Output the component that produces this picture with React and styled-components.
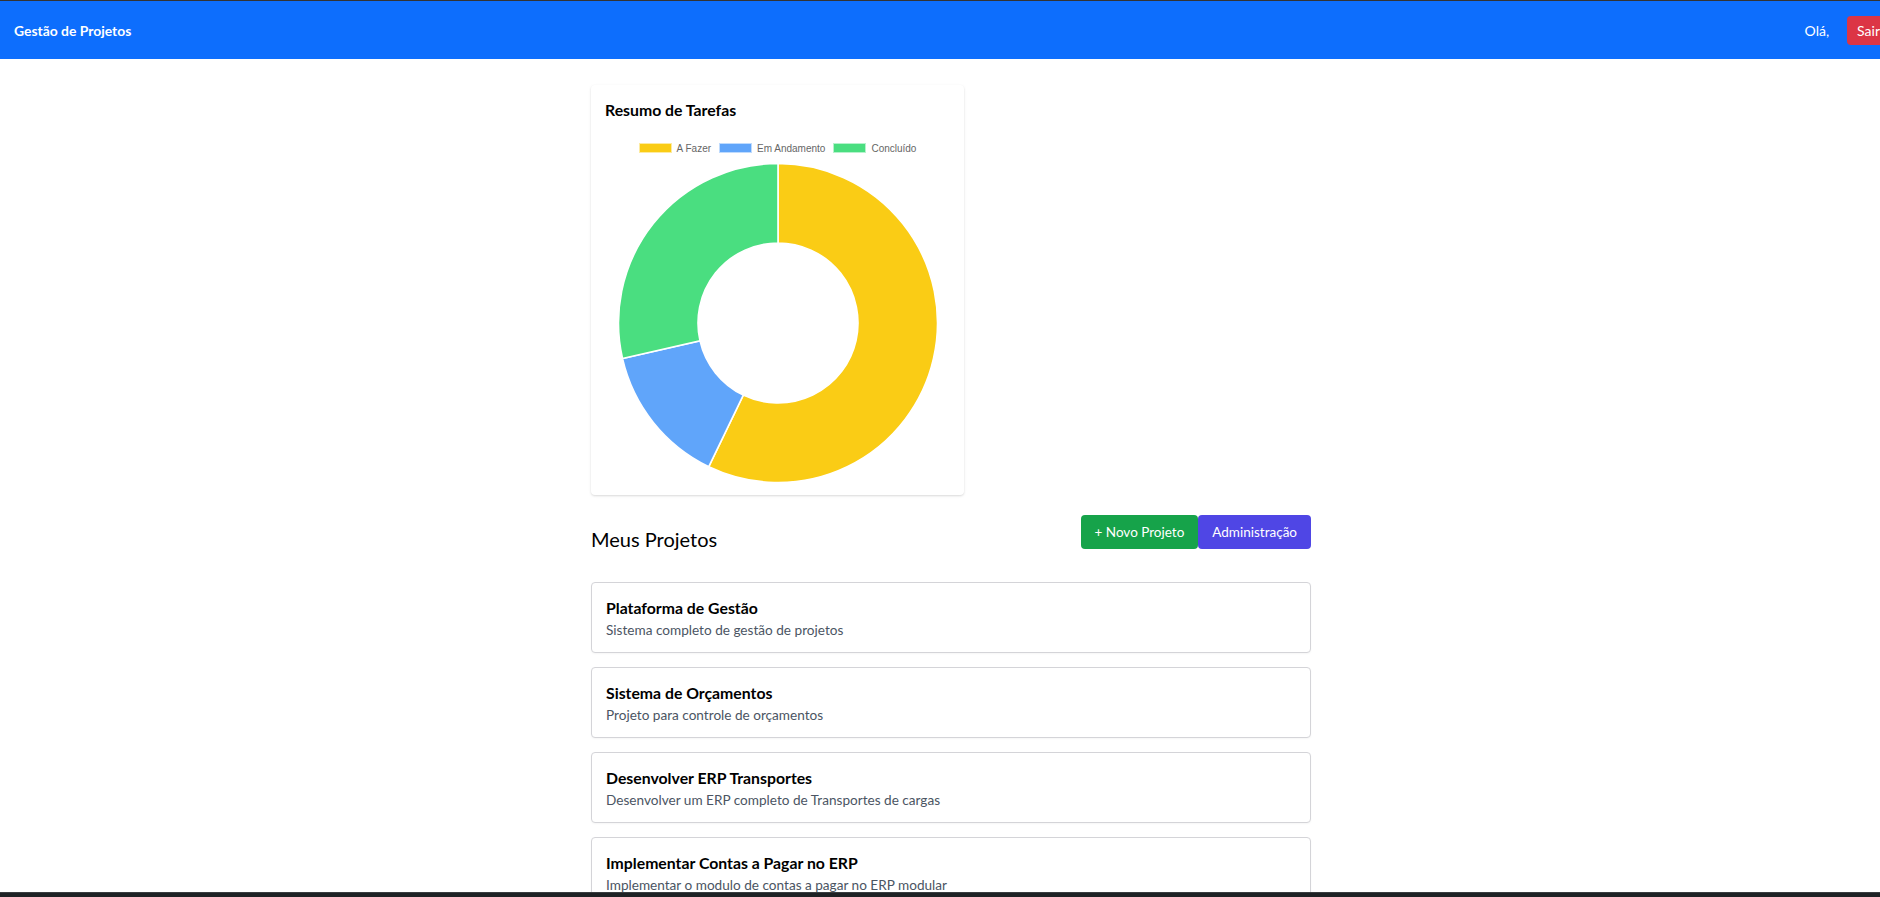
import React from 'react';
import styled, { createGlobalStyle } from 'styled-components';

const FONT = `Lato, "Noto Sans", sans-serif`;

const GlobalStyle = createGlobalStyle`
  html, body { margin: 0; padding: 0; background: #fff; overflow-x: hidden; }
  body { font-family: ${FONT}; color: #000; }
  * { box-sizing: border-box; }
`;

const Navbar = styled.header`
  display: flex;
  align-items: center;
  justify-content: space-between;
  height: 59px;
  padding-left: 14px;
  background: #0d6efd;
  border-top: 1px solid #333;
`;

const Brand = styled.span`
  color: #fff;
  font-size: 13.9px;
  font-weight: 700;
`;

const NavRight = styled.div`
  display: flex;
  align-items: center;
  gap: 18px;
  margin-right: -10px;
`;

const Greeting = styled.span`
  color: #fff;
  font-size: 14px;
`;

const LogoutButton = styled.button`
  height: 29px;
  padding: 0 10px;
  border: none;
  border-radius: 4px;
  background: #dc3545;
  color: #fff;
  font-family: inherit;
  font-size: 14px;
`;

const Main = styled.main`
  padding: 26px 0 40px 22px;
`;

const Container = styled.div`
  max-width: 720px;
  margin: 0 auto;
`;

const ChartCard = styled.section`
  width: 373px;
  height: 410px;
  padding: 13px 14px 14px;
  background: #fff;
  border-radius: 4px;
  box-shadow: 0 1px 3px rgba(0, 0, 0, 0.1), 0 1px 2px rgba(0, 0, 0, 0.06);
`;

const CardTitle = styled.h3`
  margin: 0;
  font-size: 15.8px;
  line-height: 24px;
  font-weight: 700;
`;

const Legend = styled.div`
  display: flex;
  justify-content: center;
  align-items: center;
  gap: 8px;
  height: 10px;
  margin-top: 21px;
`;

const LegendItem = styled.div`
  display: flex;
  align-items: center;
  gap: 5px;
  font-family: "Liberation Sans", Arial, sans-serif;
  font-size: 10px;
  color: #666;
`;

const LegendSwatch = styled.span`
  width: 33px;
  height: 10px;
  background: ${(p) => p.$color};
  border: 1px solid rgba(255, 255, 255, 0.6);
`;

const DonutSvg = styled.svg`
  display: block;
  margin: 9px auto 0;
`;

const SectionHeader = styled.div`
  display: flex;
  justify-content: space-between;
  align-items: flex-start;
  height: 34px;
  margin-top: 20px;
`;

const SectionTitle = styled.h2`
  margin: 10px 0 0;
  font-size: 20px;
  line-height: 28px;
  font-weight: 400;
`;

const ButtonGroup = styled.div`
  display: flex;
`;

const ActionButton = styled.button`
  height: 34px;
  padding: 0 14px;
  border: none;
  border-radius: 4px;
  background: ${(p) => (p.$variant === 'admin' ? '#4f46e5' : '#16a34a')};
  color: #fff;
  font-family: inherit;
  font-size: 13.5px;
`;

const ProjectList = styled.div`
  display: flex;
  flex-direction: column;
  gap: 14px;
  margin-top: 33px;
`;

const ProjectCard = styled.article`
  padding: 13px 14px 12px;
  border: 1px solid #d4d4d8;
  border-radius: 4px;
  background: #fff;
  box-shadow: 0 1px 2px rgba(0, 0, 0, 0.04);
`;

const ProjectName = styled.h4`
  margin: 0;
  font-size: 15.8px;
  line-height: 24px;
  font-weight: 700;
`;

const ProjectDesc = styled.p`
  margin: 0;
  font-size: 13.6px;
  line-height: 20px;
  color: #4b5563;
`;

const BottomBar = styled.div`
  position: fixed;
  left: 0;
  right: 0;
  bottom: 0;
  height: 5px;
  background: #1e2124;
  border-top: 1px solid #3a3d40;
`;

const SEGMENTS = [
  { label: 'A Fazer', value: 4, color: '#facc15' },
  { label: 'Em Andamento', value: 1, color: '#60a5fa' },
  { label: 'Concluído', value: 2, color: '#4ade80' },
];

const PROJECTS = [
  { name: 'Plataforma de Gestão', desc: 'Sistema completo de gestão de projetos' },
  { name: 'Sistema de Orçamentos', desc: 'Projeto para controle de orçamentos' },
  { name: 'Desenvolver ERP Transportes', desc: 'Desenvolver um ERP completo de Transportes de cargas' },
  { name: 'Implementar Contas a Pagar no ERP', desc: 'Implementar o modulo de contas a pagar no ERP modular' },
];

function arcPath(cx, cy, R, r, a0, a1) {
  const p = (rad, a) => [cx + rad * Math.cos(a), cy + rad * Math.sin(a)];
  const large = a1 - a0 > Math.PI ? 1 : 0;
  const [x0, y0] = p(R, a0);
  const [x1, y1] = p(R, a1);
  const [x2, y2] = p(r, a1);
  const [x3, y3] = p(r, a0);
  return `M${x0} ${y0} A${R} ${R} 0 ${large} 1 ${x1} ${y1} L${x2} ${y2} A${r} ${r} 0 ${large} 0 ${x3} ${y3} Z`;
}

function Donut() {
  const size = 322;
  const c = size / 2;
  const total = SEGMENTS.reduce((s, x) => s + x.value, 0);
  let a = -Math.PI / 2;
  return (
    <DonutSvg width={size} height={size} viewBox={`0 0 ${size} ${size}`}>
      {SEGMENTS.map((s) => {
        const a0 = a;
        const a1 = a + (s.value / total) * Math.PI * 2;
        a = a1;
        return <path key={s.label} d={arcPath(c, c, 159.5, 80, a0, a1)} fill={s.color} stroke="#fff" strokeWidth="1.6" />;
      })}
    </DonutSvg>
  );
}

export default function App() {
  return (
    <>
      <GlobalStyle />
      <Navbar>
        <Brand>Gestão de Projetos</Brand>
        <NavRight>
          <Greeting>Olá,</Greeting>
          <LogoutButton>Sair</LogoutButton>
        </NavRight>
      </Navbar>
      <Main>
        <Container>
          <ChartCard>
            <CardTitle>Resumo de Tarefas</CardTitle>
            <Legend>
              {SEGMENTS.map((s) => (
                <LegendItem key={s.label}>
                  <LegendSwatch $color={s.color} />
                  {s.label}
                </LegendItem>
              ))}
            </Legend>
            <Donut />
          </ChartCard>
          <SectionHeader>
            <SectionTitle>Meus Projetos</SectionTitle>
            <ButtonGroup>
              <ActionButton $variant="new">+ Novo Projeto</ActionButton>
              <ActionButton $variant="admin">Administração</ActionButton>
            </ButtonGroup>
          </SectionHeader>
          <ProjectList>
            {PROJECTS.map((p) => (
              <ProjectCard key={p.name}>
                <ProjectName>{p.name}</ProjectName>
                <ProjectDesc>{p.desc}</ProjectDesc>
              </ProjectCard>
            ))}
          </ProjectList>
        </Container>
      </Main>
      <BottomBar />
    </>
  );
}
